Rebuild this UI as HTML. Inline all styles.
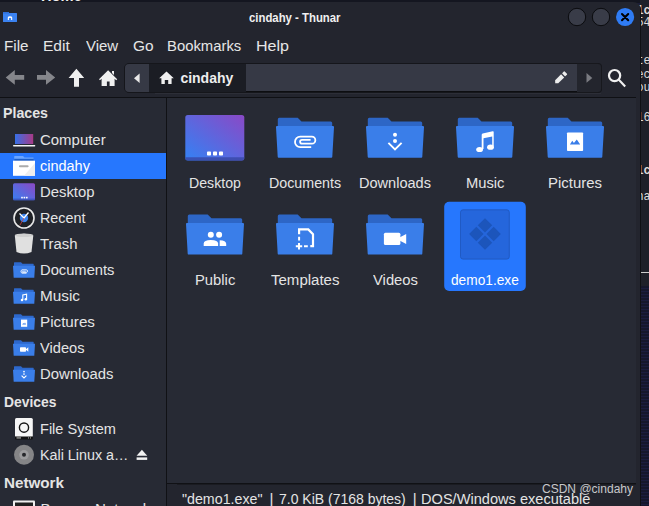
<!DOCTYPE html>
<html><head><meta charset="utf-8">
<style>
*{margin:0;padding:0;box-sizing:border-box}
html,body{width:649px;height:506px;overflow:hidden;background:#1c1e38;font-family:"Liberation Sans",sans-serif}
.a{position:absolute}
.t{position:absolute;white-space:nowrap;line-height:1}
</style></head><body>
<div class="a" style="left:0;top:0;width:649px;height:3px;background:#141620;overflow:hidden"><div class="t" style="left:40.5px;top:-11px;font-size:14px;font-weight:bold;color:#f0f0f0;transform:scaleX(1.05);transform-origin:0 0">Home</div></div>
<div class="a" style="left:640px;top:0;width:9px;height:286px;background:#1e2029"></div>
<div class="a" style="left:640px;top:272px;width:9px;height:1px;background:#cccccc"></div>
<div class="a" style="left:640px;top:286px;width:9px;height:220px;background:repeating-linear-gradient(#15172c 0 2px,#1b1d3e 2px 3px)"></div>
<div class="t" style="left:636.5px;top:6.46px;font-family:'Liberation Mono',monospace;font-size:11.8px;color:#dcdcdc;transform:scaleY(1.15);transform-origin:0 10.6px;font-weight:bold;">1c</div>
<div class="t" style="left:636.5px;top:17.76px;font-family:'Liberation Mono',monospace;font-size:11.8px;color:#dcdcdc;transform:scaleY(1.15);transform-origin:0 10.6px;">54</div>
<div class="t" style="left:636.5px;top:56.26px;font-family:'Liberation Mono',monospace;font-size:11.8px;color:#dcdcdc;transform:scaleY(1.15);transform-origin:0 10.6px;">te</div>
<div class="t" style="left:636.5px;top:70.36px;font-family:'Liberation Mono',monospace;font-size:11.8px;color:#dcdcdc;transform:scaleY(1.15);transform-origin:0 10.6px;">ec</div>
<div class="t" style="left:636.5px;top:83.46px;font-family:'Liberation Mono',monospace;font-size:11.8px;color:#dcdcdc;transform:scaleY(1.15);transform-origin:0 10.6px;">ou</div>
<div class="t" style="left:636.5px;top:113.16px;font-family:'Liberation Mono',monospace;font-size:11.8px;color:#dcdcdc;transform:scaleY(1.15);transform-origin:0 10.6px;">16</div>
<div class="t" style="left:636.5px;top:166.46px;font-family:'Liberation Mono',monospace;font-size:11.8px;color:#dcdcdc;transform:scaleY(1.15);transform-origin:0 10.6px;font-weight:bold;">1c</div>
<div class="t" style="left:636.5px;top:192.26px;font-family:'Liberation Mono',monospace;font-size:11.8px;color:#dcdcdc;transform:scaleY(1.15);transform-origin:0 10.6px;">na</div>
<div class="a" style="left:0;top:2px;width:641px;height:504px;background:#23252e;border-top-right-radius:8px;overflow:hidden">
<div class="a" style="left:0;top:-2px;width:641px;height:506px">
<svg class="a" style="left:0;top:0" width="641" height="100" viewBox="0 0 641 100">
<path d="M3 12.6 Q3 12 3.6 12 H8.2 L9.2 13 H16.4 Q17 13 17 13.6 V21.4 Q17 22 16.4 22 H3.6 Q3 22 3 21.4Z" fill="#3b83f2"/><rect x="3" y="12" width="6" height="1.5" fill="#2f6fd8"/>
<path d="M7.8 20 V17.6 Q7.8 16.3 10 16.3 Q12.2 16.3 12.2 17.6 V20 H11.1 V18.2 Q10 17.4 8.9 18.2 V20Z" fill="#fff"/>
<circle cx="577" cy="17" r="8.7" fill="#393c48" stroke="#0b0c0f" stroke-width="1"/>
<circle cx="601" cy="17" r="8.7" fill="#393c48" stroke="#0b0c0f" stroke-width="1"/>
<circle cx="625.1" cy="17" r="9.1" fill="#2f7cf5"/>
<path d="M622 14 L628.2 20.2 M628.2 14 L622 20.2" stroke="#000" stroke-width="2.1" stroke-linecap="round"/>
<!-- toolbar icons -->
<path d="M5.7 77.4 L14.8 70 V75.1 H24.2 V79.7 H14.8 V84.8Z" fill="#85868b"/>
<path d="M55.2 77.4 L46 70 V75.1 H37 V79.7 H46 V84.8Z" fill="#85868b"/>
<path d="M76.4 68.8 L84.2 78 H79 V86.8 H74 V78 H68.6Z" fill="#f0f0f0"/>
<path d="M108.1 70.2 L117.2 79.3 L116.2 80.3 L114.6 78.8 V86 H109.6 V81.5 H106.9 V86 H101.6 V78.8 L100 80.3 L99 79.3Z M112 71 H114 V75 L112 73Z" fill="#f0f0f0"/>
</svg>
<div class="t" style="left:249.30px;top:12.00px;font-size:12px;color:#f0f0f0;font-weight:bold;transform:scaleX(0.9464);transform-origin:0 0;">cindahy - Thunar</div>
<div class="t" style="left:3.80px;top:39.15px;font-size:14.9px;color:#e6e6e6;transform:scaleX(1.0205);transform-origin:0 0;">File</div>
<div class="t" style="left:43.40px;top:39.15px;font-size:14.9px;color:#e6e6e6;transform:scaleX(1.0438);transform-origin:0 0;">Edit</div>
<div class="t" style="left:86.00px;top:39.15px;font-size:14.9px;color:#e6e6e6;transform:scaleX(1.0054);transform-origin:0 0;">View</div>
<div class="t" style="left:133.40px;top:39.15px;font-size:14.9px;color:#e6e6e6;transform:scaleX(1.0364);transform-origin:0 0;">Go</div>
<div class="t" style="left:167.30px;top:39.15px;font-size:14.9px;color:#e6e6e6;transform:scaleX(0.9970);transform-origin:0 0;">Bookmarks</div>
<div class="t" style="left:256.40px;top:39.15px;font-size:14.9px;color:#e6e6e6;transform:scaleX(1.0769);transform-origin:0 0;">Help</div>
<div class="a" style="left:124px;top:63px;width:478px;height:30px;border-radius:5px;background:#1b1d24;border:1px solid #15161b"></div>
<div class="a" style="left:125px;top:64px;width:24px;height:28px;border-radius:4px 0 0 4px;background:#363945"></div>
<div class="a" style="left:246px;top:64px;width:331px;height:28px;background:#363945;border-bottom:1px solid #0d0e11"></div>
<div class="a" style="left:155px;top:93px;width:446px;height:1px;background:#2c2e37"></div>
<div class="a" style="left:577px;top:63px;width:25px;height:30px;border:1px solid #17181d;border-left:none;border-radius:0 4px 4px 0;background:#23252d"></div>
<svg class="a" style="left:0;top:0" width="641" height="100" viewBox="0 0 641 100">
<path d="M139.6 73.6 V83 L134 78.3Z" fill="#e8e8e8"/>
<path d="M166.5 71.4 L173.8 78.2 H171.6 V84 H168.2 V80 H164.8 V84 H161.4 V78.2 H159.2Z" fill="#f0f0f0"/>
<g transform="translate(555.2,83.3) rotate(-45)" fill="#ededed"><path d="M0 0 L2.1 -2.2 H10.5 V2.2 H2.1Z"/><rect x="11.8" y="-2.2" width="3.2" height="4.4" rx="0.6"/></g>
<path d="M586.5 73 V82.8 L592.3 77.9Z" fill="#7a7b81"/>
<circle cx="614.6" cy="75.6" r="5.6" fill="none" stroke="#f0f0f0" stroke-width="2.2"/>
<path d="M618.6 79.6 L625.2 86.4" stroke="#f0f0f0" stroke-width="2.1"/>
</svg>
<div class="t" style="left:180.40px;top:71.00px;font-size:14px;color:#eeeeee;font-weight:bold;">cindahy</div>
<div class="a" style="left:0;top:97px;width:636px;height:1px;background:#0f1014"></div>
<div class="a" style="left:0;top:98px;width:166px;height:408px;background:#272a34"></div>
<div class="a" style="left:167px;top:98px;width:469px;height:385px;background:#272a34"></div>
<div class="a" style="left:640px;top:0;width:1px;height:506px;background:#0f1014"></div>
<div class="a" style="left:166px;top:98px;width:1px;height:408px;background:#101115"></div>
<div class="a" style="left:167px;top:483px;width:469px;height:1px;background:#101115"></div>
<div class="a" style="left:177px;top:484px;width:459px;height:1px;background:#1a1b21"></div>
<div class="a" style="left:0;top:153px;width:166px;height:26px;background:#2677fe"></div>
<div class="t" style="left:3.40px;top:105.70px;font-size:14.6px;color:#e4e4e4;font-weight:bold;transform:scaleX(0.9725);transform-origin:0 0;">Places</div>
<div class="t" style="left:40.30px;top:131.95px;font-size:15.1px;color:#e4e4e4;transform:scaleX(0.9910);transform-origin:0 0;">Computer</div>
<div class="t" style="left:40.30px;top:157.95px;font-size:15.1px;color:#ffffff;transform:scaleX(0.9588);transform-origin:0 0;">cindahy</div>
<div class="t" style="left:40.30px;top:183.95px;font-size:15.1px;color:#e4e4e4;transform:scaleX(0.9839);transform-origin:0 0;">Desktop</div>
<div class="t" style="left:40.30px;top:209.95px;font-size:15.1px;color:#e4e4e4;transform:scaleX(0.9510);transform-origin:0 0;">Recent</div>
<div class="t" style="left:40.30px;top:235.95px;font-size:15.1px;color:#e4e4e4;transform:scaleX(0.9859);transform-origin:0 0;">Trash</div>
<div class="t" style="left:40.30px;top:261.95px;font-size:15.1px;color:#e4e4e4;transform:scaleX(0.9755);transform-origin:0 0;">Documents</div>
<div class="t" style="left:40.30px;top:287.95px;font-size:15.1px;color:#e4e4e4;transform:scaleX(1.0144);transform-origin:0 0;">Music</div>
<div class="t" style="left:40.30px;top:313.95px;font-size:15.1px;color:#e4e4e4;transform:scaleX(1.0083);transform-origin:0 0;">Pictures</div>
<div class="t" style="left:40.30px;top:339.95px;font-size:15.1px;color:#e4e4e4;transform:scaleX(0.9696);transform-origin:0 0;">Videos</div>
<div class="t" style="left:40.30px;top:365.95px;font-size:15.1px;color:#e4e4e4;transform:scaleX(0.9839);transform-origin:0 0;">Downloads</div>
<div class="t" style="left:4.00px;top:394.70px;font-size:14.6px;color:#e4e4e4;font-weight:bold;transform:scaleX(0.9511);transform-origin:0 0;">Devices</div>
<div class="t" style="left:40.40px;top:420.95px;font-size:15.1px;color:#e4e4e4;transform:scaleX(0.9636);transform-origin:0 0;">File System</div>
<div class="t" style="left:40.40px;top:446.95px;font-size:15.1px;color:#e4e4e4;transform:scaleX(0.9478);transform-origin:0 0;">Kali Linux a…</div>
<div class="t" style="left:4.00px;top:476.20px;font-size:14.6px;color:#e4e4e4;font-weight:bold;transform:scaleX(1.0417);transform-origin:0 0;">Network</div>
<div class="t" style="left:40.40px;top:500.95px;font-size:15.1px;color:#e4e4e4;">Browse Network</div>
<svg class="a" style="left:0;top:0" width="166" height="506" viewBox="0 0 166 506">
<defs>
<linearGradient id="lap" x1="0" y1="0" x2="1" y2="0"><stop offset="0" stop-color="#3670e8"/><stop offset="1" stop-color="#a83a86"/></linearGradient>
<linearGradient id="dsk" x1="0" y1="1" x2="1" y2="0"><stop offset="0" stop-color="#3780f2"/><stop offset="1" stop-color="#8c48c4"/></linearGradient>
<g id="sf"><path d="M14 2.2 Q14 1.7 14.5 1.7 H21 L22.5 3.2 H33.2 Q33.7 3.2 33.7 3.7 V6 H14Z" fill="#2d68cc"/><path d="M13 5.3 H35 L34.3 17.2 H13.7Z" fill="#3a7ee9"/></g>
</defs>
<rect x="15" y="134" width="18.2" height="10" fill="url(#lap)"/>
<rect x="13" y="145" width="22.3" height="1.5" rx="0.7" fill="#f4f4f4"/>
<path d="M14.2 156.5 Q14.2 156 14.7 156 H23 L24.5 157.5 H33.5 V161 H14.2Z" fill="#6aa5ff"/>
<rect x="14.2" y="158.8" width="19.5" height="2.2" fill="#1d5fc9"/>
<rect x="13" y="160.7" width="22" height="15.1" fill="#ffffff"/>
<path d="M35 163 V175.8 H24Z" fill="#eeeeee"/>
<rect x="19" y="165.3" width="9.6" height="1.9" rx="0.9" fill="#ababab"/>
<rect x="13" y="183.2" width="22" height="17" rx="1.5" fill="url(#dsk)"/>
<rect x="13" y="198.6" width="22" height="1.6" fill="#3b4fb8" opacity="0.8"/>
<rect x="21.2" y="196.8" width="1.6" height="1.6" fill="#fff"/><rect x="23.6" y="196.8" width="1.6" height="1.6" fill="#fff"/><rect x="26" y="196.8" width="1.6" height="1.6" fill="#fff"/>
<circle cx="24" cy="218" r="10" fill="#1f2126" stroke="#e8e8e8" stroke-width="1.6"/>
<circle cx="24" cy="218" r="4.2" fill="#3b83f0"/>
<path d="M19.5 213.5 L24 218 L28.5 212.5" stroke="#fff" stroke-width="1.3" fill="none"/>
<path d="M24 218 L20 225" stroke="#d04040" stroke-width="0.8"/>
<path d="M14.8 235.5 Q24 232 33.3 235.5 L31.5 252 Q24 255 16.5 252Z" fill="#e0e0e0"/>
<ellipse cx="24" cy="235.3" rx="9.2" ry="1.8" fill="#cfcfcf"/>
<use href="#sf" x="0" y="260.5"/>
<use href="#sf" x="0" y="286.5"/>
<use href="#sf" x="0" y="312.5"/>
<use href="#sf" x="0" y="338.5"/>
<use href="#sf" x="0" y="364.5"/>
<path d="M26.5 273.2 H22 A1.9 1.9 0 0 1 22 269.8 H26.2 A1.3 1.3 0 0 1 26.2 272.4 H22.6 A0.6 0.6 0 0 1 22.6 271.2 H25.8" stroke="#fff" stroke-width="0.85" fill="none"/>
<path d="M22.8 300 V295 L26.6 294.1 V299" stroke="#fff" stroke-width="1.1" fill="none"/><circle cx="22" cy="300" r="1.25" fill="#fff"/><circle cx="25.8" cy="299.2" r="1.25" fill="#fff"/>
<rect x="21" y="319.6" width="6.2" height="7.2" fill="#fff"/><path d="M22.2 324.6 L23.3 323 L24.1 323.9 L25 322.6 L26 324.6Z" fill="#3a7ee9"/>
<rect x="20" y="347.2" width="6" height="4.6" rx="0.7" fill="#fff"/><path d="M25.6 349.5 L28.3 347.3 V351.7Z" fill="#fff"/>
<circle cx="24" cy="371.6" r="0.85" fill="#fff"/><circle cx="24" cy="374" r="0.85" fill="#fff"/><path d="M21.6 375.6 L24 378 L26.4 375.6" stroke="#fff" stroke-width="1.1" fill="none"/>
<rect x="15" y="418" width="17.8" height="19" rx="1.5" fill="#f6f6f6"/>
<rect x="15" y="436.5" width="17.8" height="3" rx="0.8" fill="#111"/>
<rect x="16.5" y="437.5" width="4.5" height="0.9" fill="#ddd"/><rect x="28" y="437.5" width="0.9" height="0.9" fill="#ddd"/><rect x="30" y="437.5" width="0.9" height="0.9" fill="#ddd"/>
<circle cx="24" cy="427.6" r="4.6" fill="none" stroke="#161616" stroke-width="1.4"/>
<circle cx="24" cy="454.8" r="10" fill="#858587"/>
<circle cx="24" cy="454.8" r="4.8" fill="#9c9c9e"/>
<circle cx="24" cy="454.8" r="2" fill="#26272b"/>
<path d="M136.6 455.8 L141.9 449.8 L147.2 455.8Z" fill="#f2f2f2"/><rect x="136.6" y="457.4" width="10.6" height="2.5" fill="#f2f2f2"/>
<rect x="13" y="500.5" width="22" height="10" rx="1" fill="#f0f0f0"/><rect x="15" y="502.5" width="18" height="8" fill="#202020"/>
</svg>
<svg class="a" style="left:0;top:0" width="641" height="506" viewBox="0 0 641 506">
<defs>
<linearGradient id="dsk2" x1="0" y1="1" x2="1" y2="0"><stop offset="0" stop-color="#3382f4"/><stop offset="1" stop-color="#8a49c6"/></linearGradient>
<g id="bf">
<path d="M-27.2 1.5 Q-27.2 0 -25.7 0 H-7.3 L-3.5 3.6 H25.7 Q27.2 3.6 27.2 5.1 V10 H-27.2Z" fill="#2d66c6"/>
<path d="M-28 9.3 H28 L26.3 39 H-26.3Z" fill="#3a7ee9" stroke="#3a7ee9" stroke-width="2" stroke-linejoin="round"/>
</g>
</defs>
<rect x="185.3" y="115.1" width="59" height="45.5" rx="2.5" fill="url(#dsk2)"/>
<path d="M185.3 157.3 H244.3 V158.1 Q244.3 160.6 241.8 160.6 H187.8 Q185.3 160.6 185.3 158.1Z" fill="#3a49a8" opacity="0.85"/>
<rect x="207" y="151.6" width="4" height="4" rx="0.8" fill="#fff"/><rect x="213" y="151.6" width="4" height="4" rx="0.8" fill="#fff"/><rect x="219" y="151.6" width="4" height="4" rx="0.8" fill="#fff"/>
<use href="#bf" transform="translate(305,117.8)"/>
<use href="#bf" transform="translate(395,117.8)"/>
<use href="#bf" transform="translate(485,117.8)"/>
<use href="#bf" transform="translate(575,117.8)"/>
<use href="#bf" transform="translate(215,214.6)"/>
<use href="#bf" transform="translate(305,214.6)"/>
<use href="#bf" transform="translate(395,214.6)"/>
<path d="M311.2 147.1 H300.2 A5.2 5.2 0 0 1 300.2 136.7 H311.9 A3.45 3.45 0 0 1 311.9 143.6 H302 A1.9 1.9 0 0 1 302 139.8 H310.6" stroke="#fff" stroke-width="1.8" fill="none"/>
<circle cx="395" cy="134.8" r="2" fill="#fff"/><circle cx="395" cy="141" r="2" fill="#fff"/>
<path d="M388.4 142.8 L395 149.4 L401.6 142.8" stroke="#fff" stroke-width="1.9" fill="none"/>
<path d="M481.7 149 V134.8 Q481.7 133.8 482.7 133.6 L492.7 131.3 Q493.7 131.1 493.7 132.1 V146.5 H492.2 V136.4 L483.5 138.3 V149Z" fill="#fff"/>
<ellipse cx="479.6" cy="149.5" rx="3.4" ry="2.6" fill="#fff"/><ellipse cx="490.5" cy="147.2" rx="3.4" ry="2.6" fill="#fff"/>
<rect x="567" y="132.5" width="16.1" height="18.5" rx="0.8" fill="#fff"/>
<path d="M569.9 144.6 L572.3 140.8 L573.9 143 L576.8 139.5 L580.2 144.6Z" fill="#3a7ee9"/>
<circle cx="210.8" cy="234.7" r="3" fill="#fff"/><circle cx="219.1" cy="234.7" r="3" fill="#fff"/>
<path d="M203.7 245.9 V243.5 Q203.7 239.9 210.9 239.9 Q218.1 239.9 218.1 243.5 V245.9Z" fill="#fff"/>
<path d="M219.7 245.9 V240.2 Q226.2 240.6 226.2 243.8 V245.9Z" fill="#fff"/>
<path d="M299.1 234.3 V229.4 H308.3 L313 234.1 V246.2 H310.3" stroke="#fff" stroke-width="2.2" fill="none"/>
<path d="M299.1 236.7 V240.4" stroke="#fff" stroke-width="2" fill="none"/>
<path d="M304 246.2 H307.8" stroke="#fff" stroke-width="2" fill="none"/>
<path d="M299 243 V249.5 M295.8 246.2 H302.2" stroke="#fff" stroke-width="2" fill="none"/>
<rect x="383.9" y="232.8" width="16.5" height="12.2" rx="1.5" fill="#fff"/>
<path d="M400 237.2 L406.2 234 V244 L400 240.8Z" fill="#fff"/>
<rect x="444.2" y="201.8" width="81.6" height="89.2" rx="5" fill="#2677fe"/>
<rect x="460.5" y="209.8" width="48.8" height="49.3" rx="2.5" fill="#2566dc" stroke="#1f56b9" stroke-width="0.8"/>
<g fill="#1c55bb" transform="translate(485,234) rotate(45)">
<rect x="-11.2" y="-11.2" width="10.2" height="10.2"/><rect x="1" y="-11.2" width="10.2" height="10.2"/>
<rect x="-11.2" y="1" width="10.2" height="10.2"/><rect x="1" y="1" width="10.2" height="10.2"/>
</g>
</svg>
<div class="t" style="left:188.85px;top:175.45px;font-size:15.1px;color:#e4e4e4;transform:scaleX(0.9369);transform-origin:0 0;">Desktop</div>
<div class="t" style="left:268.95px;top:175.45px;font-size:15.1px;color:#e4e4e4;transform:scaleX(0.9441);transform-origin:0 0;">Documents</div>
<div class="t" style="left:359.00px;top:175.45px;font-size:15.1px;color:#e4e4e4;transform:scaleX(0.9638);transform-origin:0 0;">Downloads</div>
<div class="t" style="left:465.75px;top:175.45px;font-size:15.1px;color:#e4e4e4;transform:scaleX(0.9764);transform-origin:0 0;">Music</div>
<div class="t" style="left:548.00px;top:175.45px;font-size:15.1px;color:#e4e4e4;transform:scaleX(0.9900);transform-origin:0 0;">Pictures</div>
<div class="t" style="left:194.85px;top:272.45px;font-size:15.1px;color:#e4e4e4;transform:scaleX(0.9799);transform-origin:0 0;">Public</div>
<div class="t" style="left:270.75px;top:272.45px;font-size:15.1px;color:#e4e4e4;transform:scaleX(0.9954);transform-origin:0 0;">Templates</div>
<div class="t" style="left:372.50px;top:272.45px;font-size:15.1px;color:#e4e4e4;transform:scaleX(0.9805);transform-origin:0 0;">Videos</div>
<div class="t" style="left:451.00px;top:272.45px;font-size:15.1px;color:#ffffff;transform:scaleX(0.9075);transform-origin:0 0;">demo1.exe</div>
<div class="t" style="left:182.00px;top:490.95px;font-size:15.1px;color:#e4e4e4;transform:scaleX(0.9423);transform-origin:0 0;">"demo1.exe"</div>
<div class="t" style="left:269.60px;top:490.95px;font-size:15.1px;color:#e4e4e4;">|</div>
<div class="t" style="left:279.00px;top:490.95px;font-size:15.1px;color:#e4e4e4;transform:scaleX(0.9268);transform-origin:0 0;">7.0 KiB (7168 bytes)</div>
<div class="t" style="left:412.80px;top:490.95px;font-size:15.1px;color:#e4e4e4;">|</div>
<div class="t" style="left:421.40px;top:490.95px;font-size:15.1px;color:#e4e4e4;transform:scaleX(0.9663);transform-origin:0 0;">DOS/Windows executable</div>
</div></div>
<div class="t" style="left:541.80px;top:483.25px;font-size:12.5px;color:#c8c8ca;transform:scaleX(0.9613);transform-origin:0 0;-webkit-font-smoothing:antialiased;">CSDN @cindahy</div>
</body></html>
